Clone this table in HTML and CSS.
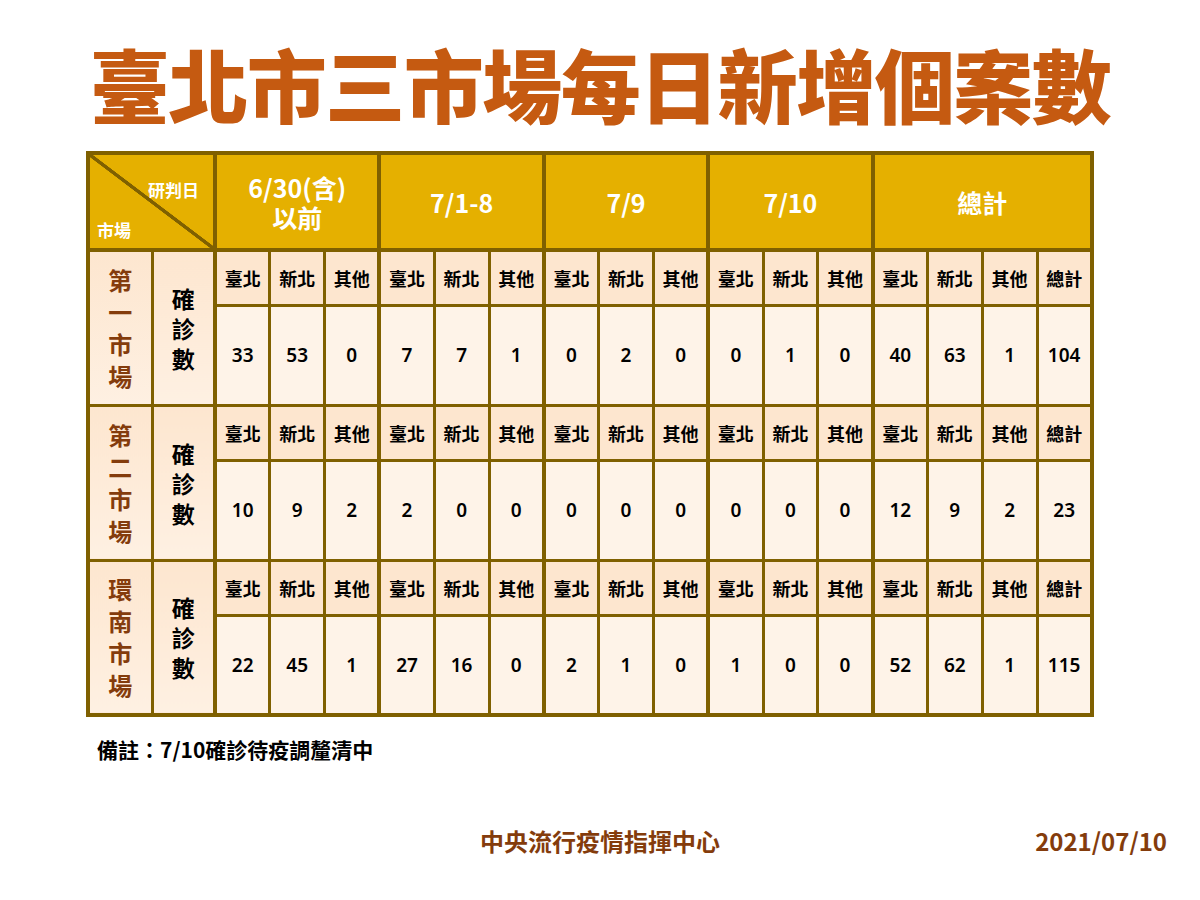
FILE: index.html
```html
<!DOCTYPE html>
<html lang="zh-Hant">
<head>
<meta charset="utf-8">
<title>臺北市三市場每日新增個案數</title>
<link rel="stylesheet" href="styles.css">
</head>
<body>
<header class="top">
  <h1 class="title">臺北市三市場每日新增個案數</h1>
</header>
<main class="table-wrap">
  <table class="cases">
    <colgroup>
      <col class="c-market"><col class="c-label">
      <col class="c-sub"><col class="c-sub"><col class="c-sub">
      <col class="c-sub"><col class="c-sub"><col class="c-sub">
      <col class="c-sub"><col class="c-sub"><col class="c-sub">
      <col class="c-sub"><col class="c-sub"><col class="c-sub">
      <col class="c-sub"><col class="c-sub"><col class="c-sub"><col class="c-sub">
    </colgroup>
    <thead>
      <tr class="head">
        <th colspan="2" class="corner">
          <div class="corner-in">
            <span class="corner-date">研判日</span>
            <span class="corner-market">市場</span>
          </div>
        </th>
        <th colspan="3" class="grp gs">6/30(含)<br>以前</th>
        <th colspan="3" class="grp gs">7/1-8</th>
        <th colspan="3" class="grp gs">7/9</th>
        <th colspan="3" class="grp gs">7/10</th>
        <th colspan="4" class="grp gs">總計</th>
      </tr>
    </thead>
    <tbody>
      <tr class="sub">
        <td rowspan="2" class="market">第<br>一<br>市<br>場</td>
        <td rowspan="2" class="label">確<br>診<br>數</td>
        <td class="gs">臺北</td><td>新北</td><td>其他</td>
        <td class="gs">臺北</td><td>新北</td><td>其他</td>
        <td class="gs">臺北</td><td>新北</td><td>其他</td>
        <td class="gs">臺北</td><td>新北</td><td>其他</td>
        <td class="gs">臺北</td><td>新北</td><td>其他</td><td>總計</td>
      </tr>
      <tr class="data">
        <td class="gs">33</td><td>53</td><td>0</td>
        <td class="gs">7</td><td>7</td><td>1</td>
        <td class="gs">0</td><td>2</td><td>0</td>
        <td class="gs">0</td><td>1</td><td>0</td>
        <td class="gs">40</td><td>63</td><td>1</td><td>104</td>
      </tr>
      <tr class="sub">
        <td rowspan="2" class="market">第<br>二<br>市<br>場</td>
        <td rowspan="2" class="label">確<br>診<br>數</td>
        <td class="gs">臺北</td><td>新北</td><td>其他</td>
        <td class="gs">臺北</td><td>新北</td><td>其他</td>
        <td class="gs">臺北</td><td>新北</td><td>其他</td>
        <td class="gs">臺北</td><td>新北</td><td>其他</td>
        <td class="gs">臺北</td><td>新北</td><td>其他</td><td>總計</td>
      </tr>
      <tr class="data">
        <td class="gs">10</td><td>9</td><td>2</td>
        <td class="gs">2</td><td>0</td><td>0</td>
        <td class="gs">0</td><td>0</td><td>0</td>
        <td class="gs">0</td><td>0</td><td>0</td>
        <td class="gs">12</td><td>9</td><td>2</td><td>23</td>
      </tr>
      <tr class="sub">
        <td rowspan="2" class="market">環<br>南<br>市<br>場</td>
        <td rowspan="2" class="label">確<br>診<br>數</td>
        <td class="gs">臺北</td><td>新北</td><td>其他</td>
        <td class="gs">臺北</td><td>新北</td><td>其他</td>
        <td class="gs">臺北</td><td>新北</td><td>其他</td>
        <td class="gs">臺北</td><td>新北</td><td>其他</td>
        <td class="gs">臺北</td><td>新北</td><td>其他</td><td>總計</td>
      </tr>
      <tr class="data last">
        <td class="gs">22</td><td>45</td><td>1</td>
        <td class="gs">27</td><td>16</td><td>0</td>
        <td class="gs">2</td><td>1</td><td>0</td>
        <td class="gs">1</td><td>0</td><td>0</td>
        <td class="gs">52</td><td>62</td><td>1</td><td>115</td>
      </tr>
    </tbody>
  </table>
  <p class="note">備註：7/10確診待疫調釐清中</p>
</main>
<footer class="foot">
  <span></span>
  <span class="agency">中央流行疫情指揮中心</span>
  <span class="date">2021/07/10</span>
</footer>
</body>
</html>
```

FILE: styles.css
```css
* {
  box-sizing: border-box;
}

html,
body {
  margin: 0;
  background: #ffffff;
}

body {
  width: 1200px;
  height: 900px;
  font-family: "Noto Sans CJK TC", "Noto Sans", sans-serif;
  color: #000000;
  overflow: hidden;
}

.top {
  padding-top: 38px;
  text-align: center;
}

.title {
  margin: 0;
  font-size: 80px;
  line-height: 88px;
  font-weight: 900;
  color: #c55a11;
  letter-spacing: -1.5px;
}

.table-wrap {
  padding: 25px 0 0 86px;
}

.cases {
  border-collapse: collapse;
  table-layout: fixed;
  width: 1004px;
  border: 4px solid #7f6000;
}

.c-market {
  width: 64px;
}

.c-label {
  width: 63px;
}

.c-sub {
  width: 54.8px;
}

.cases th,
.cases td {
  border: 3px solid #7f6000;
  padding: 0;
  text-align: center;
  vertical-align: middle;
}

.cases .gs {
  border-left: 4px solid #7f6000;
}

.head {
  height: 97px;
}

.head th {
  background: #e5b000;
  color: #ffffff;
  border-bottom: 4px solid #7f6000;
}

.grp {
  font-size: 25px;
  line-height: 30px;
  font-weight: 700;
}

.head .corner {
  background: linear-gradient(to top right, #e5b000 calc(50% - 2px), #7f6000 calc(50% - 1.5px), #7f6000 calc(50% + 1.5px), #e5b000 calc(50% + 2px));
  border-right: 4px solid #7f6000;
}

.corner-in {
  height: 93px;
  display: flex;
  flex-direction: column;
  justify-content: space-between;
  padding: 24px 14px 7px 7px;
  font-size: 17px;
  line-height: 22px;
  font-weight: 700;
}

.corner-date {
  align-self: flex-end;
}

.corner-market {
  align-self: flex-start;
}

.sub {
  height: 55px;
}

.sub td {
  background: #fde6cf;
  font-size: 18px;
  font-weight: 700;
}

.data {
  height: 100px;
}

.data td {
  background: #fef3e8;
  font-family: "Noto Sans", "Noto Sans CJK TC", sans-serif;
  font-size: 19px;
  font-weight: 600;
}

.cases .market {
  background: linear-gradient(#fde6cf, #fef0e2);
  color: #843c0c;
  font-size: 24px;
  line-height: 32px;
  font-weight: 700;
  border-left: 4px solid #7f6000;
}

.cases .label {
  background: linear-gradient(#fde6cf, #fef0e2);
  font-size: 23px;
  line-height: 30px;
  font-weight: 700;
  font-family: "Noto Sans CJK TC", sans-serif;
}

.note {
  margin: 18px 0 0 11px;
  font-size: 21px;
  line-height: 28px;
  font-weight: 700;
}

.foot {
  display: grid;
  grid-template-columns: 1fr auto 1fr;
  align-items: center;
  padding: 63px 33px 0;
  color: #843c0c;
  font-weight: 700;
}

.agency {
  font-size: 24px;
  line-height: 30px;
}

.date {
  justify-self: end;
  font-size: 24px;
  line-height: 30px;
}
```
